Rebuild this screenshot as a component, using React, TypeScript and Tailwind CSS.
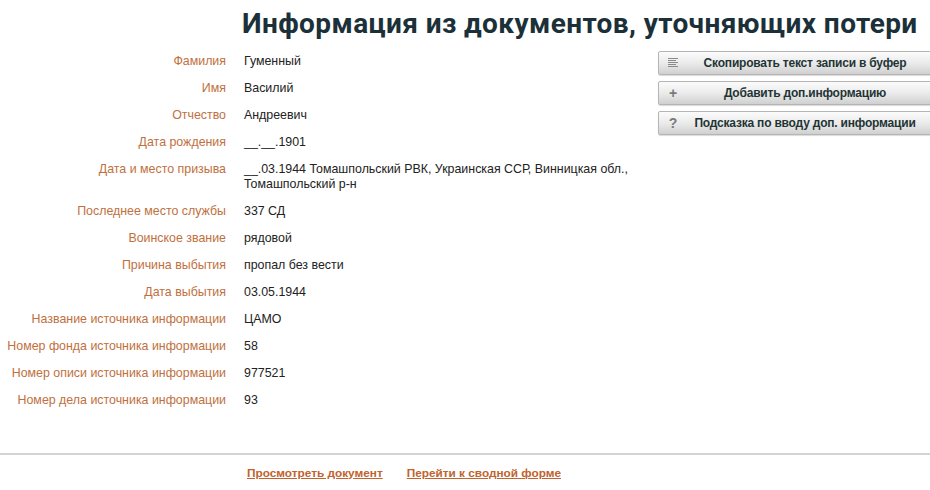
import React from "react";

type Row = { label: string; value: string };

const ROWS: Row[] = [
  { label: "Фамилия", value: "Гуменный" },
  { label: "Имя", value: "Василий" },
  { label: "Отчество", value: "Андреевич" },
  { label: "Дата рождения", value: "__.__.1901" },
  {
    label: "Дата и место призыва",
    value: "__.03.1944 Томашпольский РВК, Украинская ССР, Винницкая обл., Томашпольский р-н",
  },
  { label: "Последнее место службы", value: "337 СД" },
  { label: "Воинское звание", value: "рядовой" },
  { label: "Причина выбытия", value: "пропал без вести" },
  { label: "Дата выбытия", value: "03.05.1944" },
  { label: "Название источника информации", value: "ЦАМО" },
  { label: "Номер фонда источника информации", value: "58" },
  { label: "Номер описи источника информации", value: "977521" },
  { label: "Номер дела источника информации", value: "93" },
];

const ARIAL = "font-['Liberation_Sans',Arial,sans-serif]";

function LinesIcon() {
  return (
    <svg width="10" height="10" viewBox="0 0 10 10">
      <rect x="0" y="0" width="10" height="1" fill="#8a8a8a" />
      <rect x="0" y="2" width="8" height="1" fill="#8a8a8a" />
      <rect x="0" y="4" width="10" height="1" fill="#8a8a8a" />
      <rect x="0" y="6" width="8" height="1" fill="#8a8a8a" />
      <rect x="0" y="8" width="10" height="1" fill="#8a8a8a" />
    </svg>
  );
}

function ActionButton({ icon, text }: { icon: React.ReactNode; text: string }) {
  return (
    <div className="h-[24px] flex items-center border border-[#b5b5b5] rounded-[2px] bg-gradient-to-b from-[#fbfbfb] via-[#ebebeb] to-[#d0d0d0] shadow-[0_1px_1px_rgba(0,0,0,0.15)]">
      <div className="w-[28px] flex justify-center text-[#7a7a7a] text-[14px] font-bold">{icon}</div>
      <div className="flex-1 text-center text-[12px] font-bold text-[#1f3535] pr-[12px] tracking-[-0.2px]">{text}</div>
    </div>
  );
}

export default function App() {
  return (
    <div className={`w-[930px] h-[490px] bg-white overflow-hidden ${ARIAL}`}>
      <h1 className="pl-[242px] pt-[6px] h-[48px] text-[28px] leading-[36px] font-bold tracking-[0.4px] text-[#1b3038] font-['Roboto',sans-serif] whitespace-nowrap">
        Информация из документов, уточняющих потери
      </h1>

      <div className="flex h-[405px]">
        <div className="grid grid-cols-[226px_404px] gap-x-[18px] gap-y-[12px] content-start pt-[6px] text-[12.4px] leading-[15px]">
          {ROWS.map((r) => (
            <React.Fragment key={r.label}>
              <div className="text-right text-[#c0703e]">{r.label}</div>
              <div className="text-[#222]">{r.value}</div>
            </React.Fragment>
          ))}
        </div>

        <div className="ml-[10px] w-[278px] shrink-0 flex flex-col gap-[6px] pt-[3px]">
          <ActionButton icon={<LinesIcon />} text="Скопировать текст записи в буфер" />
          <ActionButton icon="+" text="Добавить доп.информацию" />
          <ActionButton icon="?" text="Подсказка по вводу доп. информации" />
        </div>
      </div>

      <div className="border-t-2 border-[#d4d4d4]" />

      <div className="flex gap-[24px] pl-[247px] pt-[10px] text-[11.8px] font-bold text-[#c0632e]">
        <a href="#" className="underline">Просмотреть документ</a>
        <a href="#" className="underline">Перейти к сводной форме</a>
      </div>
    </div>
  );
}
